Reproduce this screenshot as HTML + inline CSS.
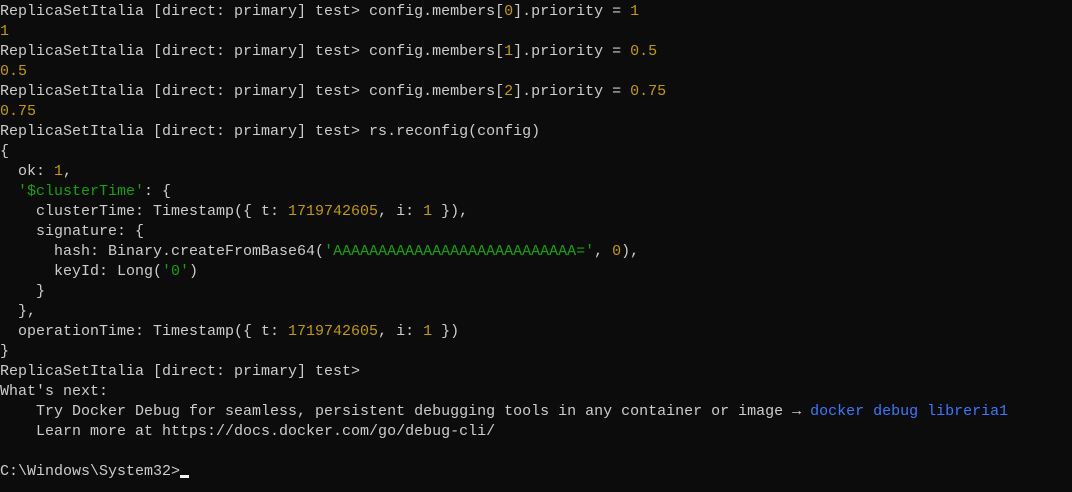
<!DOCTYPE html>
<html><head><meta charset="utf-8"><style>
html,body{margin:0;padding:0;background:#0c0c0c;width:1072px;height:492px;overflow:hidden}
pre{margin:0;padding:2px 0 0 0;font-family:"Liberation Mono",monospace;font-size:15px;line-height:20px;color:#cccccc;white-space:pre}
.y{color:#c19c00}.g{color:#13a10e}.b{color:#3b78ff}
.cur{display:inline-block;width:9px;height:3px;background:#f2f2f2;vertical-align:-3px}
</style></head><body><pre>ReplicaSetItalia [direct: primary] test&gt; config.members[<span class="y">0</span>].priority = <span class="y">1</span>
<span class="y">1</span>
ReplicaSetItalia [direct: primary] test&gt; config.members[<span class="y">1</span>].priority = <span class="y">0.5</span>
<span class="y">0.5</span>
ReplicaSetItalia [direct: primary] test&gt; config.members[<span class="y">2</span>].priority = <span class="y">0.75</span>
<span class="y">0.75</span>
ReplicaSetItalia [direct: primary] test&gt; rs.reconfig(config)
{
  ok: <span class="y">1</span>,
  <span class="g">'$clusterTime'</span>: {
    clusterTime: Timestamp({ t: <span class="y">1719742605</span>, i: <span class="y">1</span> }),
    signature: {
      hash: Binary.createFromBase64(<span class="g">'AAAAAAAAAAAAAAAAAAAAAAAAAAA='</span>, <span class="y">0</span>),
      keyId: Long(<span class="g">'0'</span>)
    }
  },
  operationTime: Timestamp({ t: <span class="y">1719742605</span>, i: <span class="y">1</span> })
}
ReplicaSetItalia [direct: primary] test&gt;
What's next:
    Try Docker Debug for seamless, persistent debugging tools in any container or image → <span class="b">docker debug libreria1</span>
    Learn more at https://docs.docker.com/go/debug-cli/

C:\Windows\System32&gt;<span class="cur"></span></pre></body></html>
